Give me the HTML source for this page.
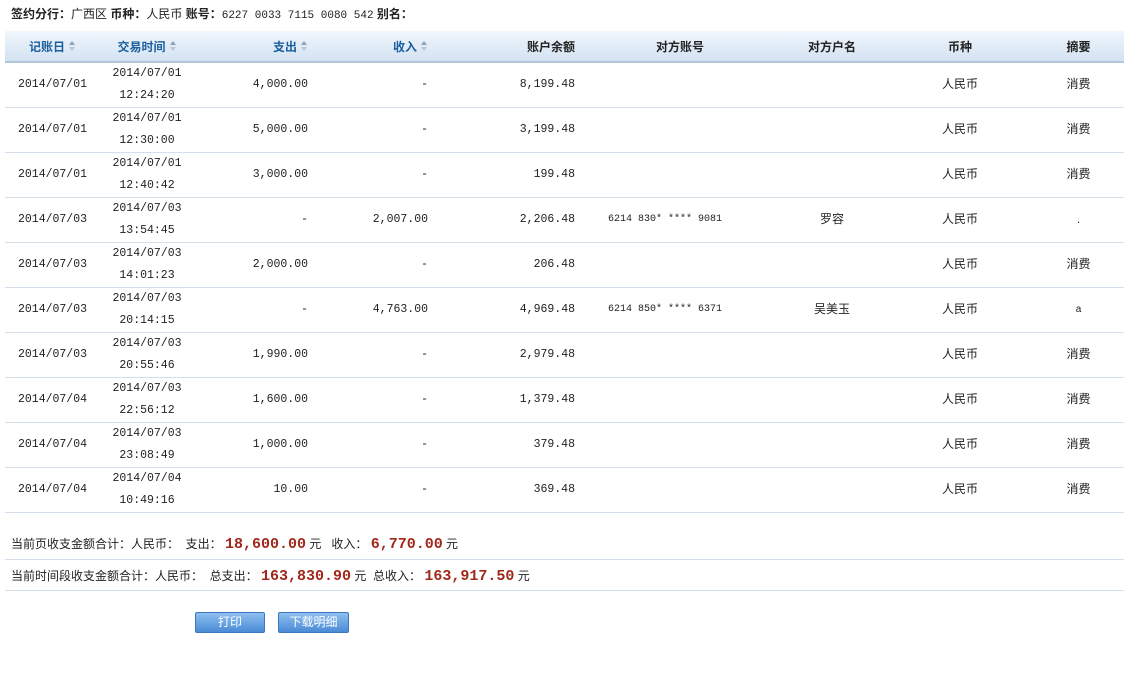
<!DOCTYPE html>
<html><head><meta charset="utf-8"><style>
body{margin:0;background:#fff;width:1124px;height:675px;overflow:hidden;font-family:"Liberation Sans","Noto Sans CJK SC",sans-serif;font-size:12px;color:#222;position:relative}
.top{position:absolute;left:11px;top:5px;font-size:12px;white-space:nowrap}
.top b{font-weight:bold}
.mono{font-family:"Liberation Mono","Noto Sans CJK SC",monospace;font-size:11.5px}
table{position:absolute;left:5px;top:31px;border-collapse:collapse;table-layout:fixed;width:1119px}
th{height:30px;background:linear-gradient(#f1f6fc,#d3e2f2);border-bottom:2px solid #b3c5d8;color:#222;font-weight:bold;font-size:12px;padding:0}
th.s{color:#1a5f9e}
td{height:44px;border-bottom:1px solid #d5dfe9;padding:0;text-align:center;font-size:12px;line-height:14px}
td.m{font-family:"Liberation Mono",monospace;font-size:11.5px;line-height:22px}
td.c{padding-bottom:2px;height:42px}
.r{text-align:right;padding-right:8px}
.l{text-align:left;padding-left:25px}
.ac{font-family:"Liberation Mono",monospace;font-size:10px}
.ar{display:inline-block;vertical-align:middle;margin-left:4px;width:7px;height:10px;position:relative;top:-1px}
.ar:before{content:"";position:absolute;left:0;top:0;border-left:3.5px solid transparent;border-right:3.5px solid transparent;border-bottom:4px solid #8aa2bb}
.ar:after{content:"";position:absolute;left:0;top:6px;border-left:3.5px solid transparent;border-right:3.5px solid transparent;border-top:4px solid #b5c6d6}
.sum{position:absolute;left:11px;font-size:12px;white-space:nowrap}
.red{color:#a0281a;font-weight:bold;font-family:"Liberation Mono",monospace;font-size:15px}
.hr{position:absolute;left:5px;width:1119px;height:1px;background:#d5dfe9}
.btn{position:absolute;top:612px;height:19px;border:1px solid #3b79bf;border-radius:2px;background:linear-gradient(#8ec0f0,#4a8ad6);color:#fff;text-align:center;line-height:19px;font-size:12px}
</style></head><body>
<div class="top"><b>签约分行：</b>广西区 <b>币种：</b>人民币 <b>账号：</b><span class="mono" style="font-size:11px">6227 0033 7115 0080 542</span> <b>别名：</b></div>
<table>
<colgroup><col style="width:95px"><col style="width:94px"><col style="width:122px"><col style="width:120px"><col style="width:147px"><col style="width:194px"><col style="width:110px"><col style="width:146px"><col style="width:91px"></colgroup>
<tr><th class="s">记账日<span class="ar"></span></th><th class="s">交易时间<span class="ar"></span></th><th class="s r">支出<span class="ar"></span></th><th class="s r">收入<span class="ar"></span></th><th class="r">账户余额</th><th>对方账号</th><th>对方户名</th><th>币种</th><th>摘要</th></tr>
<tr><td class="m">2014/07/01</td><td class="m">2014/07/01<br>12:24:20</td><td class="m r">4,000.00</td><td class="m r">-</td><td class="m r">8,199.48</td><td class="l"></td><td></td><td class="c">人民币</td><td class="c">消费</td></tr>
<tr><td class="m">2014/07/01</td><td class="m">2014/07/01<br>12:30:00</td><td class="m r">5,000.00</td><td class="m r">-</td><td class="m r">3,199.48</td><td class="l"></td><td></td><td class="c">人民币</td><td class="c">消费</td></tr>
<tr><td class="m">2014/07/01</td><td class="m">2014/07/01<br>12:40:42</td><td class="m r">3,000.00</td><td class="m r">-</td><td class="m r">199.48</td><td class="l"></td><td></td><td class="c">人民币</td><td class="c">消费</td></tr>
<tr><td class="m">2014/07/03</td><td class="m">2014/07/03<br>13:54:45</td><td class="m r">-</td><td class="m r">2,007.00</td><td class="m r">2,206.48</td><td class="l ac">6214 830* **** 9081</td><td class="c">罗容</td><td class="c">人民币</td><td class="c">.</td></tr>
<tr><td class="m">2014/07/03</td><td class="m">2014/07/03<br>14:01:23</td><td class="m r">2,000.00</td><td class="m r">-</td><td class="m r">206.48</td><td class="l"></td><td></td><td class="c">人民币</td><td class="c">消费</td></tr>
<tr><td class="m">2014/07/03</td><td class="m">2014/07/03<br>20:14:15</td><td class="m r">-</td><td class="m r">4,763.00</td><td class="m r">4,969.48</td><td class="l ac">6214 850* **** 6371</td><td class="c">吴美玉</td><td class="c">人民币</td><td style="font-size:10px">a</td></tr>
<tr><td class="m">2014/07/03</td><td class="m">2014/07/03<br>20:55:46</td><td class="m r">1,990.00</td><td class="m r">-</td><td class="m r">2,979.48</td><td class="l"></td><td></td><td class="c">人民币</td><td class="c">消费</td></tr>
<tr><td class="m">2014/07/04</td><td class="m">2014/07/03<br>22:56:12</td><td class="m r">1,600.00</td><td class="m r">-</td><td class="m r">1,379.48</td><td class="l"></td><td></td><td class="c">人民币</td><td class="c">消费</td></tr>
<tr><td class="m">2014/07/04</td><td class="m">2014/07/03<br>23:08:49</td><td class="m r">1,000.00</td><td class="m r">-</td><td class="m r">379.48</td><td class="l"></td><td></td><td class="c">人民币</td><td class="c">消费</td></tr>
<tr><td class="m">2014/07/04</td><td class="m">2014/07/04<br>10:49:16</td><td class="m r">10.00</td><td class="m r">-</td><td class="m r">369.48</td><td class="l"></td><td></td><td class="c">人民币</td><td class="c">消费</td></tr>
</table>
<div class="sum" style="top:535px">当前页收支金额合计：人民币： &nbsp;支出： <span class="red">18,600.00</span> 元 &nbsp; 收入： <span class="red">6,770.00</span> 元</div>
<div class="hr" style="top:559px"></div>
<div class="sum" style="top:567px">当前时间段收支金额合计：人民币： &nbsp;总支出： <span class="red">163,830.90</span> 元 &nbsp;总收入： <span class="red">163,917.50</span> 元</div>
<div class="hr" style="top:590px"></div>
<div class="btn" style="left:195px;width:68px">打印</div>
<div class="btn" style="left:278px;width:69px">下载明细</div>
</body></html>
